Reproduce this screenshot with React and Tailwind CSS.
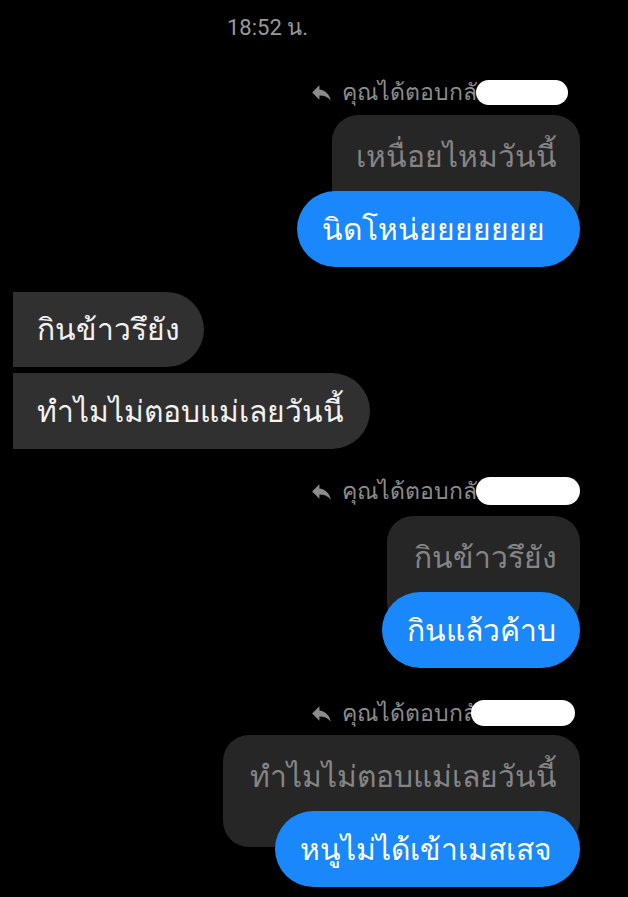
import React from "react";

function ReplyIcon() {
  return (
    <svg width="25" height="25" viewBox="0 0 24 24" fill="#8c8c8c">
      <path d="M10 9V5l-7 7 7 7v-4.1c5 0 8.5 1.6 11 5.1-1-5-4-10-11-11z" />
    </svg>
  );
}

function ReplyHeader({ blobClass }) {
  return (
    <div className="flex h-[30px] items-center pl-[309px]">
      <ReplyIcon />
      <span className="ml-[8px] text-[23px] text-[#8c8c8c]">คุณได้ตอบกลั</span>
      <span className={blobClass} />
    </div>
  );
}

function QuotedReply({ quote, text, quoteClass, blueClass }) {
  return (
    <div className="flex flex-col items-end pr-[48px]">
      <div className={"h-[112px] rounded-[26px] bg-[#262626] pr-[23px] pt-[22px] text-right text-[30px] leading-[40px] text-[#858585] " + quoteClass}>
        {quote}
      </div>
      <div className={"-mt-[36px] flex h-[76px] items-center rounded-full bg-[#1a87fb] pl-[25px] text-[30px] text-white " + blueClass}>
        {text}
      </div>
    </div>
  );
}

export default function App() {
  return (
    <div className="h-[897px] w-[628px] overflow-hidden bg-black font-['Liberation_Sans',sans-serif]">
      <div className="flex h-[54px] items-center pl-[227px] font-['Roboto',sans-serif] text-[22px] text-[#9a9a9a]">18:52 น.</div>

      <div className="mt-[23px]">
        <ReplyHeader blobClass="-ml-[1px] h-[25px] w-[92px] rounded-full bg-white" />
      </div>
      <div className="mt-[8px]">
        <QuotedReply quote="เหนื่อยไหมวันนี้" text="นิดโหน่ยยยยยยย" quoteClass="w-[248px]" blueClass="w-[283px]" />
      </div>

      <div className="mt-[25px] flex flex-col items-start gap-[6px] pl-[13px] text-[30px] text-[#f2f2f2]">
        <div className="flex h-[75px] w-[191px] items-center rounded-tl-[26px] rounded-bl-[6px] rounded-r-full bg-[#303030] pl-[24px]">กินข้าวรึยัง</div>
        <div className="flex h-[76px] w-[357px] items-center rounded-tl-[6px] rounded-bl-[26px] rounded-r-full bg-[#303030] pl-[24px]">ทำไมไม่ตอบแม่เลยวันนี้</div>
      </div>

      <div className="mt-[27px]">
        <ReplyHeader blobClass="-ml-[1px] h-[28px] w-[104px] rounded-full bg-white" />
      </div>
      <div className="mt-[10px]">
        <QuotedReply quote="กินข้าวรึยัง" text="กินแล้วค้าบ" quoteClass="w-[193px]" blueClass="w-[198px]" />
      </div>

      <div className="mt-[30px]">
        <ReplyHeader blobClass="-ml-[6px] h-[26px] w-[104px] rounded-full bg-white" />
      </div>
      <div className="mt-[7px]">
        <QuotedReply quote="ทำไมไม่ตอบแม่เลยวันนี้" text="หนูไม่ได้เข้าเมสเสจ" quoteClass="w-[357px]" blueClass="w-[305px]" />
      </div>
    </div>
  );
}
